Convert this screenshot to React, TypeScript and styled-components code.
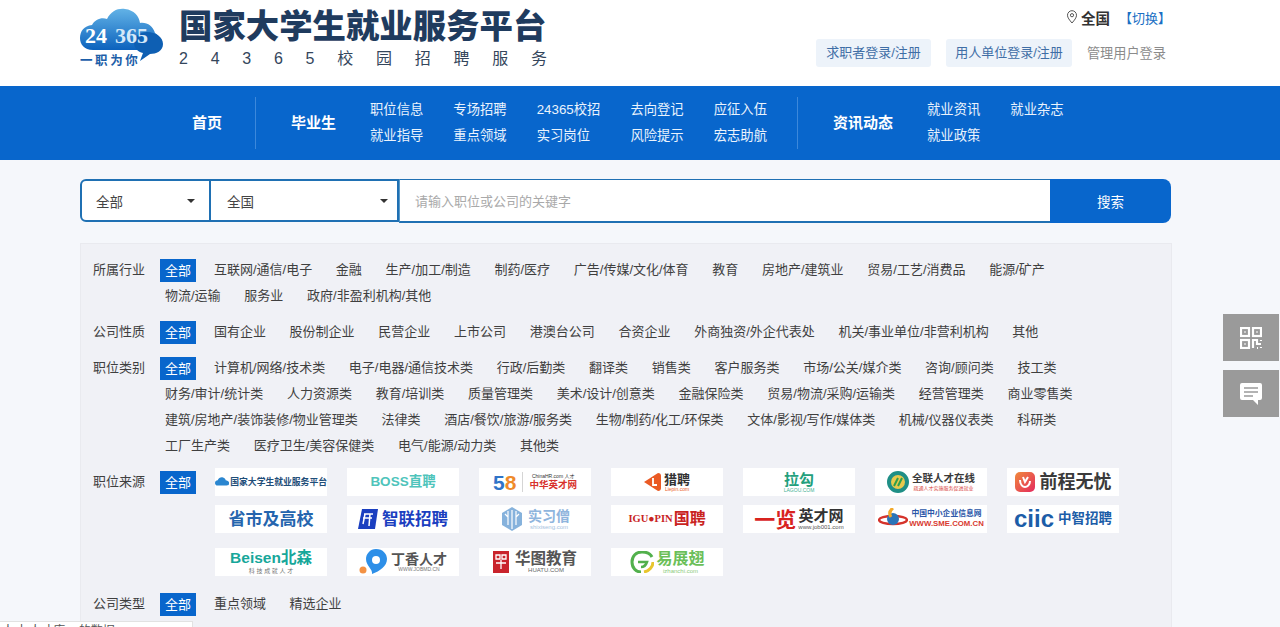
import React from "react";
import styled, { createGlobalStyle } from "styled-components";

const FONT = `"Liberation Sans", "Noto Sans CJK SC", sans-serif`;

const Global = createGlobalStyle`
  html, body { margin: 0; padding: 0; height: 627px; overflow: hidden; background: #f5f7fb; }
  body { font-family: ${FONT}; font-size: 13px; color: #444; }
  * { box-sizing: border-box; }
`;

const Page = styled.div`
  width: 1280px;
  height: 627px;
  overflow: hidden;
  position: relative;
`;

const Header = styled.header`
  height: 86px;
  background: #fff;
  padding: 0 113px 0 80px;
  display: flex;
  justify-content: space-between;
`;
const Brand = styled.div`
  display: flex;
  gap: 14px;
`;
const BrandText = styled.div`
  width: 368px;
  padding-top: 6px;
`;
const Title = styled.div`
  font-size: 33.4px;
  line-height: 42px;
  font-weight: 900;
  color: #1f3b5e;
  white-space: nowrap;
`;
const Subtitle = styled.div`
  display: flex;
  justify-content: space-between;
  font-size: 16px;
  line-height: 20px;
  margin-top: 1px;
  color: #34465c;
`;
const HeaderRight = styled.div`
  display: flex;
  flex-direction: column;
  align-items: flex-end;
`;
const City = styled.div`
  display: flex;
  align-items: center;
  height: 20px;
  margin-top: 7px;
  margin-right: -4px;
  font-size: 13px;
  color: #333;
`;
const CityName = styled.b`
  margin: 0 9px 0 3px;
  font-size: 14.5px;
`;
const Switch = styled.span`
  color: #1a6fc4;
  white-space: nowrap;
`;
const Logins = styled.div`
  display: flex;
  align-items: center;
  gap: 15px;
  margin-top: 12px;
  margin-right: 1px;
`;
const LoginBtn = styled.span<{ $pad: number }>`
  height: 28px;
  line-height: 27px;
  padding: 0 ${(p) => p.$pad}px;
  background: #edf3fa;
  border-radius: 3px;
  color: #3f6ea6;
`;
const AdminLink = styled.span`
  color: #8b8b8b;
  font-size: 13.2px;
  margin-top: -1px;
`;

const Nav = styled.nav`
  height: 74px;
  background: #0866cc;
  padding: 0 0 0 192px;
  display: flex;
  align-items: center;
  color: #fff;
`;
const NavMain = styled.span<{ $r: number }>`
  font-size: 15px;
  font-weight: 700;
  margin-right: ${(p) => p.$r}px;
  margin-bottom: 3px;
  white-space: nowrap;
`;
const NavDivider = styled.i`
  width: 1px;
  height: 52px;
  background: #3c88db;
  margin-right: 35px;
`;
const NavGroup = styled.div<{ $r: number }>`
  display: grid;
  grid-auto-flow: column;
  grid-template-rows: 26px 26px;
  column-gap: 30px;
  margin-right: ${(p) => p.$r}px;
`;
const NavLink = styled.span`
  font-size: 13.33px;
  line-height: 26px;
  white-space: nowrap;
  color: #eaf3fd;
`;

const Search = styled.div`
  margin: 19px 109px 0 80px;
  height: 44px;
  display: flex;
`;
const Select = styled.div<{ $w: number; $first?: boolean; $r: number }>`
  width: ${(p) => p.$w}px;
  height: 43px;
  background: #fff;
  border: 2px solid #1f70b3;
  border-left-width: ${(p) => (p.$first ? 2 : 0)}px;
  border-radius: ${(p) => (p.$first ? "6px 0 0 6px" : "0")};
  padding: 0 ${(p) => p.$r}px 0 ${(p) => (p.$first ? 14 : 16)}px;
  display: flex;
  align-items: center;
  justify-content: space-between;
  font-size: 13.5px;
  color: #444;
`;
const Caret = styled.i`
  width: 0;
  height: 0;
  border: 4px solid transparent;
  border-top-color: #333;
  border-bottom-width: 0;
`;
const KeywordBox = styled.div`
  flex: 1;
  background: #fff;
  border: 2px solid #1f70b3;
  border-top-width: 1.5px;
  border-left: 1px solid #5b9ac8;
  border-right: 0;
  padding-left: 15px;
  display: flex;
  align-items: center;
  font-size: 13px;
  color: #a9a9a9;
`;
const SearchBtn = styled.div`
  width: 121px;
  background: #0866cc;
  border-radius: 0 8px 8px 0;
  color: #fff;
  font-size: 13.5px;
  display: flex;
  align-items: center;
  justify-content: center;
`;

const Panel = styled.section`
  margin: 20px 108px 0 80px;
  height: 400px;
  background: #f0f1f6;
  border: 1px solid #e9eaef;
  border-bottom: 0;
  padding: 13px 0 0 12px;
  display: flex;
  flex-direction: column;
  gap: 10px;
`;
const Row = styled.div`
  display: flex;
`;
const RowLabel = styled.div`
  width: 67px;
  line-height: 26px;
  flex: none;
  color: #3f3f3f;
`;
const Options = styled.div`
  width: 960px;
  display: flex;
  flex-wrap: wrap;
  align-items: center;
  column-gap: 13.7px;
`;
const Opt = styled.span<{ $on?: boolean }>`
  height: ${(p) => (p.$on ? 23 : 26)}px;
  line-height: ${(p) => (p.$on ? 23 : 26)}px;
  padding: 0 5px;
  margin-right: ${(p) => (p.$on ? -0.8 : 0)}px;
  white-space: nowrap;
  background: ${(p) => (p.$on ? "#0866cc" : "transparent")};
  color: ${(p) => (p.$on ? "#fff" : "#3f3f3f")};
`;
const SourceRow = styled.div`
  display: flex;
  align-items: flex-start;
  gap: 19px;
`;
const SourceTag = styled(Opt)`
  margin: 1.5px 0 0;
`;
const Sources = styled.div`
  display: grid;
  grid-template-columns: repeat(7, 112px);
  grid-template-rows: 37px 43px 33px;
  column-gap: 20px;
  margin-top: -1px;
  align-items: start;
`;
const LogoCard = styled.div<{ $c?: string; $s?: number; $gap?: number }>`
  height: 28px;
  background: #fff;
  display: flex;
  align-items: center;
  justify-content: center;
  gap: ${(p) => p.$gap ?? 3}px;
  overflow: hidden;
  white-space: nowrap;
  color: ${(p) => p.$c || "#333"};
  font-size: ${(p) => p.$s || 13}px;
  font-weight: 700;
  line-height: 1;
`;
const LogoStack = styled.span<{ $gap?: number }>`
  display: flex;
  flex-direction: column;
  align-items: center;
  gap: ${(p) => p.$gap ?? 1}px;
`;
const Tiny = styled.span<{ $c?: string; $s?: number }>`
  font-size: ${(p) => p.$s || 6}px;
  font-weight: 400;
  color: ${(p) => p.$c || "#888"};
`;
const Colored = styled.span<{ $c: string; $s?: number; $serif?: boolean }>`
  color: ${(p) => p.$c};
  font-size: ${(p) => (p.$s ? `${p.$s}px` : "inherit")};
  font-family: ${(p) => (p.$serif ? `"Liberation Serif", serif` : "inherit")};
`;
const Rule = styled.i`
  width: 1px;
  height: 20px;
  background: #d5d5d5;
  margin: 0 6px;
`;

const Side = styled.aside`
  position: absolute;
  right: 1px;
  top: 314px;
  display: flex;
  flex-direction: column;
  gap: 9px;
`;
const SideBtn = styled.div`
  width: 56px;
  height: 47px;
  background: #9a9a9a;
  display: flex;
  align-items: center;
  justify-content: center;
`;
const StatusTip = styled.div`
  position: absolute;
  left: 0;
  top: 621px;
  width: 193px;
  height: 6px;
  background: #fff;
  border: 1px solid #e2e2e2;
  border-left: 0;
  border-bottom: 0;
  overflow: hidden;
  padding: 1px 0 0 2px;
  font-size: 12px;
  line-height: 16px;
  color: #555;
  white-space: pre;
`;
const LogoWrap = styled.div`
  padding-top: 7px;
  width: 85px;
  height: 70px;
`;

const CloudLogo = () => (
  <LogoWrap>
    <svg width="85" height="62" viewBox="0 0 85 62">
      <defs>
        <linearGradient id="cg" x1="0" y1="0" x2="0" y2="1">
          <stop offset="0" stopColor="#62b2e6" />
          <stop offset="1" stopColor="#0c62bd" />
        </linearGradient>
      </defs>
      <path
        d="M13 43C4 43 0 37 0 31 0 24 4 19 12 18 15 12 22 10 27 12 31 4 38 1 45 2 54 3 59 9 60 16 67 15 73 19 75 26 81 30 82 35 80 40 78 42 72 43 68 43Z"
        fill="url(#cg)"
      />
      <path d="M54 36C54 29 60 25 67 25 76 25 83 30 83 37 83 44 76 47 70 47L60 54 63 46C58 45 54 41 54 36Z" fill="#0e5fb3" />
      <text x="5" y="36" fontFamily="Liberation Serif, serif" fontWeight="700" fontSize="22" fill="#fff">24</text>
      <text x="35" y="36" fontFamily="Liberation Serif, serif" fontWeight="700" fontSize="22" fill="#d5e8f8">365</text>
      <text x="0" y="58" fontFamily="Noto Sans CJK SC, sans-serif" fontWeight="700" fontSize="12.5" letterSpacing="2.6" fill="#1c5ea8">一职为你</text>
    </svg>
  </LogoWrap>
);

const Pin = () => (
  <svg width="12" height="14" viewBox="0 0 12 14" fill="none" stroke="#555" strokeWidth="1">
    <path d="M6 13C3.5 10 1.5 7.8 1.5 5.2a4.5 4.5 0 0 1 9 0C10.5 7.8 8.5 10 6 13Z" />
    <circle cx="6" cy="5.2" r="1.6" />
  </svg>
);
const QrIcon = () => (
  <svg width="22" height="22" viewBox="0 0 22 22" fill="none" stroke="#fff" strokeWidth="2.2">
    <rect x="1" y="1" width="8" height="8" />
    <rect x="13" y="1" width="8" height="8" />
    <rect x="1" y="13" width="8" height="8" />
    <path d="M13 21v-8h4v4h4M21 13v1M17 21h1M21 20v1" />
    <path d="M4.5 5h1M16.5 5h1M4.5 17h1" />
  </svg>
);
const ChatIcon = () => (
  <svg width="22" height="22" viewBox="0 0 22 22">
    <path d="M2 0h18a2 2 0 0 1 2 2v13a2 2 0 0 1-2 2h-2v5l-5-5H2a2 2 0 0 1-2-2V2a2 2 0 0 1 2-2Z" fill="#fff" />
    <path d="M4 5h14M4 9h14M4 13h9" stroke="#9a9a9a" strokeWidth="1.5" />
  </svg>
);

const MiniCloud = () => (
  <svg width="16" height="12" viewBox="0 0 16 12">
    <path d="M3 10C1 10 0 8.5 0 7 0 5 1.5 4 3 4 4 1.5 7 0 9 1 11 1.5 12 3 12 4 14.5 4 16 6 16 7.5 16 9 15 10 13 10Z" fill="#2a86d0" />
  </svg>
);
const LiepinMark = () => (
  <svg width="17" height="18" viewBox="0 0 17 18">
    <path d="M0 9 14 0c2 0 3 1 3 3v12c0 2-1 3-3 3Z" fill="#ea5a24" />
    <path d="M9 5v7h4" stroke="#fff" strokeWidth="1.8" fill="none" />
  </svg>
);
const GreenRing = () => (
  <svg width="22" height="22" viewBox="0 0 22 22">
    <circle cx="11" cy="11" r="9" fill="#e8c94d" stroke="#1f8f86" strokeWidth="4" />
    <path d="M7 15 11 7M11 15l4-8" stroke="#2e9f4c" strokeWidth="2" />
  </svg>
);
const Job51Mark = () => (
  <svg width="20" height="20" viewBox="0 0 20 20">
    <defs>
      <linearGradient id="jb" x1="0" y1="0" x2="1" y2="1">
        <stop offset="0" stopColor="#f08a3c" />
        <stop offset="1" stopColor="#e42a5e" />
      </linearGradient>
    </defs>
    <rect width="20" height="20" rx="5" fill="url(#jb)" />
    <path d="M5 8c0 5 3 7 5 7s5-2 5-6M8 5l2 5 3-5" stroke="#fff" strokeWidth="2" fill="none" />
  </svg>
);
const ZhaopinMark = () => (
  <svg width="20" height="20" viewBox="0 0 20 20">
    <path d="M4 0h16l-3 20H0Z" fill="#1b3fc0" />
    <path d="M6 5h9M5 9h9M7 5l-2 10M12 5l-1 12" stroke="#fff" strokeWidth="1.5" fill="none" />
  </svg>
);
const HexMark = () => (
  <svg width="24" height="24" viewBox="0 0 24 24">
    <path d="M12 0 22 6v12l-10 6-10-6V6Z" fill="#86b2dc" />
    <path d="M8 4v14M12 3v19M16 4v14M5 7l3 3M19 7l-3 3" stroke="#fff" strokeWidth="1.2" />
  </svg>
);
const OrbitMark = () => (
  <svg width="30" height="22" viewBox="0 0 30 22">
    <ellipse cx="15" cy="12" rx="14" ry="4" fill="none" stroke="#d5332b" strokeWidth="2.5" />
    <circle cx="15" cy="11" r="6" fill="#2a74b8" />
    <path d="M15 0c-4 3-4 6-2 9" stroke="#f2a92b" strokeWidth="3" fill="none" />
  </svg>
);
const PinMark = () => (
  <svg width="30" height="26" viewBox="0 0 30 26">
    <circle cx="4" cy="21" r="3.5" fill="#f39143" />
    <path d="M17 0c7 0 11 5 11 10 0 7-7 12-15 15C14 20 7 17 7 10 7 5 11 0 17 0Z" fill="#2d8fe8" />
    <circle cx="17" cy="11" r="4" fill="#fff" />
  </svg>
);
const HuatuMark = () => (
  <svg width="16" height="22" viewBox="0 0 16 22">
    <rect width="16" height="22" fill="#c9242c" />
    <path d="M3 4h4v4H3ZM9 4h4v4H9ZM8 9v9M3 12h10" stroke="#fff" strokeWidth="1.3" fill="none" />
  </svg>
);
const WingMark = () => (
  <svg width="24" height="22" viewBox="0 0 24 22" fill="none">
    <path d="M22 6C20 2 16 1 12 1 6 1 2 5 2 11s4 10 9 10" stroke="#52b04c" strokeWidth="3" />
    <path d="M8 11h9c-1 3-3 5-6 5" stroke="#52b04c" strokeWidth="2.5" />
    <path d="M23 11c0 5-4 9-9 10" stroke="#e8c62d" strokeWidth="3" />
  </svg>
);

const industries = ["互联网/通信/电子","金融","生产/加工/制造","制药/医疗","广告/传媒/文化/体育","教育","房地产/建筑业","贸易/工艺/消费品","能源/矿产","物流/运输","服务业","政府/非盈利机构/其他"];
const natures = ["国有企业","股份制企业","民营企业","上市公司","港澳台公司","合资企业","外商独资/外企代表处","机关/事业单位/非营利机构","其他"];
const jobs = ["计算机/网络/技术类","电子/电器/通信技术类","行政/后勤类","翻译类","销售类","客户服务类","市场/公关/媒介类","咨询/顾问类","技工类","财务/审计/统计类","人力资源类","教育/培训类","质量管理类","美术/设计/创意类","金融保险类","贸易/物流/采购/运输类","经营管理类","商业零售类","建筑/房地产/装饰装修/物业管理类","法律类","酒店/餐饮/旅游/服务类","生物/制药/化工/环保类","文体/影视/写作/媒体类","机械/仪器仪表类","科研类","工厂生产类","医疗卫生/美容保健类","电气/能源/动力类","其他类"];
const kinds = ["重点领域","精选企业"];

const FilterRow = ({ label, items }: { label: string; items: string[] }) => (
  <Row>
    <RowLabel>{label}</RowLabel>
    <Options>
      <Opt $on>全部</Opt>
      {items.map((t) => (
        <Opt key={t}>{t}</Opt>
      ))}
    </Options>
  </Row>
);

export default function App() {
  return (
    <Page>
      <Global />
      <Header>
        <Brand>
          <CloudLogo />
          <BrandText>
            <Title>国家大学生就业服务平台</Title>
            <Subtitle>
              {"24365校园招聘服务".split("").map((c, i) => (
                <span key={i}>{c}</span>
              ))}
            </Subtitle>
          </BrandText>
        </Brand>
        <HeaderRight>
          <City>
            <Pin />
            <CityName>全国</CityName>
            <Switch>【切换】</Switch>
          </City>
          <Logins>
            <LoginBtn $pad={10.5}>求职者登录/注册</LoginBtn>
            <LoginBtn $pad={9}>用人单位登录/注册</LoginBtn>
            <AdminLink>管理用户登录</AdminLink>
          </Logins>
        </HeaderRight>
      </Header>

      <Nav>
        <NavMain $r={33}>首页</NavMain>
        <NavDivider />
        <NavMain $r={34}>毕业生</NavMain>
        <NavGroup $r={30}>
          {["职位信息","就业指导","专场招聘","重点领域","24365校招","实习岗位","去向登记","风险提示","应征入伍","宏志助航"].map((t) => (
            <NavLink key={t}>{t}</NavLink>
          ))}
        </NavGroup>
        <NavDivider />
        <NavMain $r={34}>资讯动态</NavMain>
        <NavGroup $r={0}>
          {["就业资讯","就业政策","就业杂志"].map((t) => (
            <NavLink key={t}>{t}</NavLink>
          ))}
        </NavGroup>
      </Nav>

      <Search>
        <Select $w={131} $first $r={14}>全部<Caret /></Select>
        <Select $w={188} $r={9}>全国<Caret /></Select>
        <KeywordBox>请输入职位或公司的关键字</KeywordBox>
        <SearchBtn>搜索</SearchBtn>
      </Search>

      <Panel>
        <FilterRow label="所属行业" items={industries} />
        <FilterRow label="公司性质" items={natures} />
        <FilterRow label="职位类别" items={jobs} />
        <Row>
          <RowLabel>职位来源</RowLabel>
          <SourceRow>
            <SourceTag $on>全部</SourceTag>
            <Sources>
              <LogoCard $c="#1f4e79" $s={8.8} $gap={1}><MiniCloud />国家大学生就业服务平台</LogoCard>
              <LogoCard $c="#4fc4bb" $s={13.5} $gap={1}>BOSS直聘</LogoCard>
              <LogoCard $s={21} $gap={0}>
                <Colored $c="#2f74c8">5</Colored>
                <Colored $c="#ef8a2a">8</Colored>
                <Rule />
                <LogoStack>
                  <Tiny $c="#333" $s={5}>ChinaHR.com 人才</Tiny>
                  <Colored $c="#d8322c" $s={9.5}>中华英才网</Colored>
                </LogoStack>
              </LogoCard>
              <LogoCard $s={13}>
                <LiepinMark />
                <LogoStack>
                  <span>猎聘</span>
                  <Tiny $c="#ea5a24" $s={5}>Liepin.com</Tiny>
                </LogoStack>
              </LogoCard>
              <LogoCard $c="#22a07c" $s={15}>
                <LogoStack>
                  <span>拉勾</span>
                  <Tiny $c="#3fb094" $s={5}>LAGOU.COM</Tiny>
                </LogoStack>
              </LogoCard>
              <LogoCard $c="#3a3a3a" $s={10.5}>
                <GreenRing />
                <LogoStack $gap={2}>
                  <span>全联人才在线</span>
                  <Tiny $c="#d8443c" $s={5}>疏通人才实施服务促进就业</Tiny>
                </LogoStack>
              </LogoCard>
              <LogoCard $c="#3a3a3a" $s={18} $gap={5}><Job51Mark />前程无忧</LogoCard>

              <LogoCard $c="#2565ae" $s={17}>省市及高校</LogoCard>
              <LogoCard $c="#1b3fc0" $s={16.5} $gap={4}><ZhaopinMark />智联招聘</LogoCard>
              <LogoCard $c="#8fb5dd" $s={14} $gap={4}>
                <HexMark />
                <LogoStack>
                  <span>实习僧</span>
                  <Tiny $c="#a4c2e0" $s={6}>shixiseng.com</Tiny>
                </LogoStack>
              </LogoCard>
              <LogoCard $c="#c9241f" $s={10.5} $gap={1}>
                <Colored $c="#c9241f" $serif>IGU●PIN</Colored>
                <Colored $c="#c9241f" $s={16}>国聘</Colored>
              </LogoCard>
              <LogoCard $s={15} $gap={2}>
                <Colored $c="#d8231f" $s={21}>一览</Colored>
                <LogoStack>
                  <span>英才网</span>
                  <Tiny $c="#555" $s={6}>www.job001.com</Tiny>
                </LogoStack>
              </LogoCard>
              <LogoCard $c="#2a56a8" $s={7.8} $gap={1}>
                <OrbitMark />
                <LogoStack $gap={2}>
                  <span>中国中小企业信息网</span>
                  <Colored $c="#d83a30">WWW.SME.COM.CN</Colored>
                </LogoStack>
              </LogoCard>
              <LogoCard $c="#1c5da8" $s={13.5} $gap={4}>
                <Colored $c="#1c5da8" $s={24}>ciic</Colored>中智招聘
              </LogoCard>

              <LogoCard $c="#17a79a" $s={15.5}>
                <LogoStack $gap={2}>
                  <span>Beisen北森</span>
                  <Tiny $c="#777" $s={6}>科 技 成 就 人 才</Tiny>
                </LogoStack>
              </LogoCard>
              <LogoCard $c="#555" $s={14} $gap={2}>
                <PinMark />
                <LogoStack>
                  <span>丁香人才</span>
                  <Tiny $c="#777" $s={5}>WWW.JOBMD.CN</Tiny>
                </LogoStack>
              </LogoCard>
              <LogoCard $c="#555" $s={15.5} $gap={6}>
                <HuatuMark />
                <LogoStack>
                  <span>华图教育</span>
                  <Tiny $c="#666" $s={6}>HUATU.COM</Tiny>
                </LogoStack>
              </LogoCard>
              <LogoCard $c="#6bbf59" $s={16} $gap={3}>
                <WingMark />
                <LogoStack>
                  <span>易展翅</span>
                  <Tiny $c="#8acb7c" $s={6}>izhanchi.com</Tiny>
                </LogoStack>
              </LogoCard>
            </Sources>
          </SourceRow>
        </Row>
        <FilterRow label="公司类型" items={kinds} />
      </Panel>

      <Side>
        <SideBtn><QrIcon /></SideBtn>
        <SideBtn><ChatIcon /></SideBtn>
      </Side>
      <StatusTip>{"人才 人才库    的数据"}</StatusTip>
    </Page>
  );
}
